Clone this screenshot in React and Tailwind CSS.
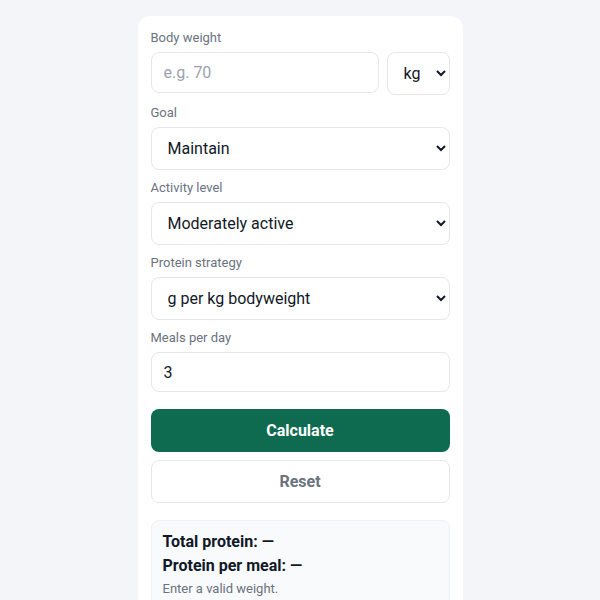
import { useState } from "react";

function Field({ label, children }) {
  return (
    <div className="mb-2">
      <label className="block text-[13px] leading-5 text-[#6b7280] mb-1">{label}</label>
      {children}
    </div>
  );
}

const boxCls =
  "w-full h-[43px] rounded-lg border border-[#e5e7eb] bg-white px-3 text-base text-[#111827] outline-none";

export default function App() {
  const [weight, setWeight] = useState("");
  const [meals, setMeals] = useState("3");

  return (
    <div className="min-h-[600px] bg-[#f3f5f9] pt-4 font-['Roboto',sans-serif]">
      <div className="mx-auto w-[325px] rounded-xl bg-white px-[13px] pt-3 pb-[13px]">
        <Field label="Body weight">
          <div className="flex gap-2">
            <input
              className="flex-1 min-w-0 h-[41px] rounded-lg border border-[#e5e7eb] bg-white px-3 text-base text-[#111827] placeholder:text-[#9ca3af] outline-none"
              placeholder="e.g. 70"
              value={weight}
              onChange={(e) => setWeight(e.target.value)}
            />
            <select className="w-[63px] h-[43px] rounded-lg border border-[#e5e7eb] bg-white px-3 text-base text-[#111827]">
              <option>kg</option>
              <option>lb</option>
            </select>
          </div>
        </Field>
        <Field label="Goal">
          <select className={boxCls}>
            <option>Maintain</option>
            <option>Lose fat</option>
            <option>Build muscle</option>
          </select>
        </Field>
        <Field label="Activity level">
          <select className={boxCls} defaultValue="Moderately active">
            <option>Sedentary</option>
            <option>Moderately active</option>
            <option>Very active</option>
          </select>
        </Field>
        <Field label="Protein strategy">
          <select className={boxCls}>
            <option>g per kg bodyweight</option>
            <option>% of calories</option>
          </select>
        </Field>
        <Field label="Meals per day">
          <input
            className="w-full h-10 rounded-lg border border-[#e5e7eb] bg-white px-3 text-base text-[#111827] outline-none"
            value={meals}
            onChange={(e) => setMeals(e.target.value)}
          />
        </Field>
        <button className="mt-[9px] w-full h-[43px] rounded-lg bg-[#0f6b4f] text-base font-bold text-white">
          Calculate
        </button>
        <button className="mt-2 w-full h-[43px] rounded-lg border border-[#e5e7eb] bg-white text-base font-bold text-[#6b7280]">
          Reset
        </button>
        <div className="mt-[17px] rounded-lg border border-[#eef1f5] bg-[#f8fafc] px-[11px] pt-[9px] pb-3">
          <p className="text-base leading-6 font-bold text-[#111827]">Total protein: —</p>
          <p className="text-base leading-6 font-bold text-[#111827]">Protein per meal: —</p>
          <p className="mt-px text-[13px] leading-5 text-[#6b7280]">Enter a valid weight.</p>
        </div>
      </div>
    </div>
  );
}
